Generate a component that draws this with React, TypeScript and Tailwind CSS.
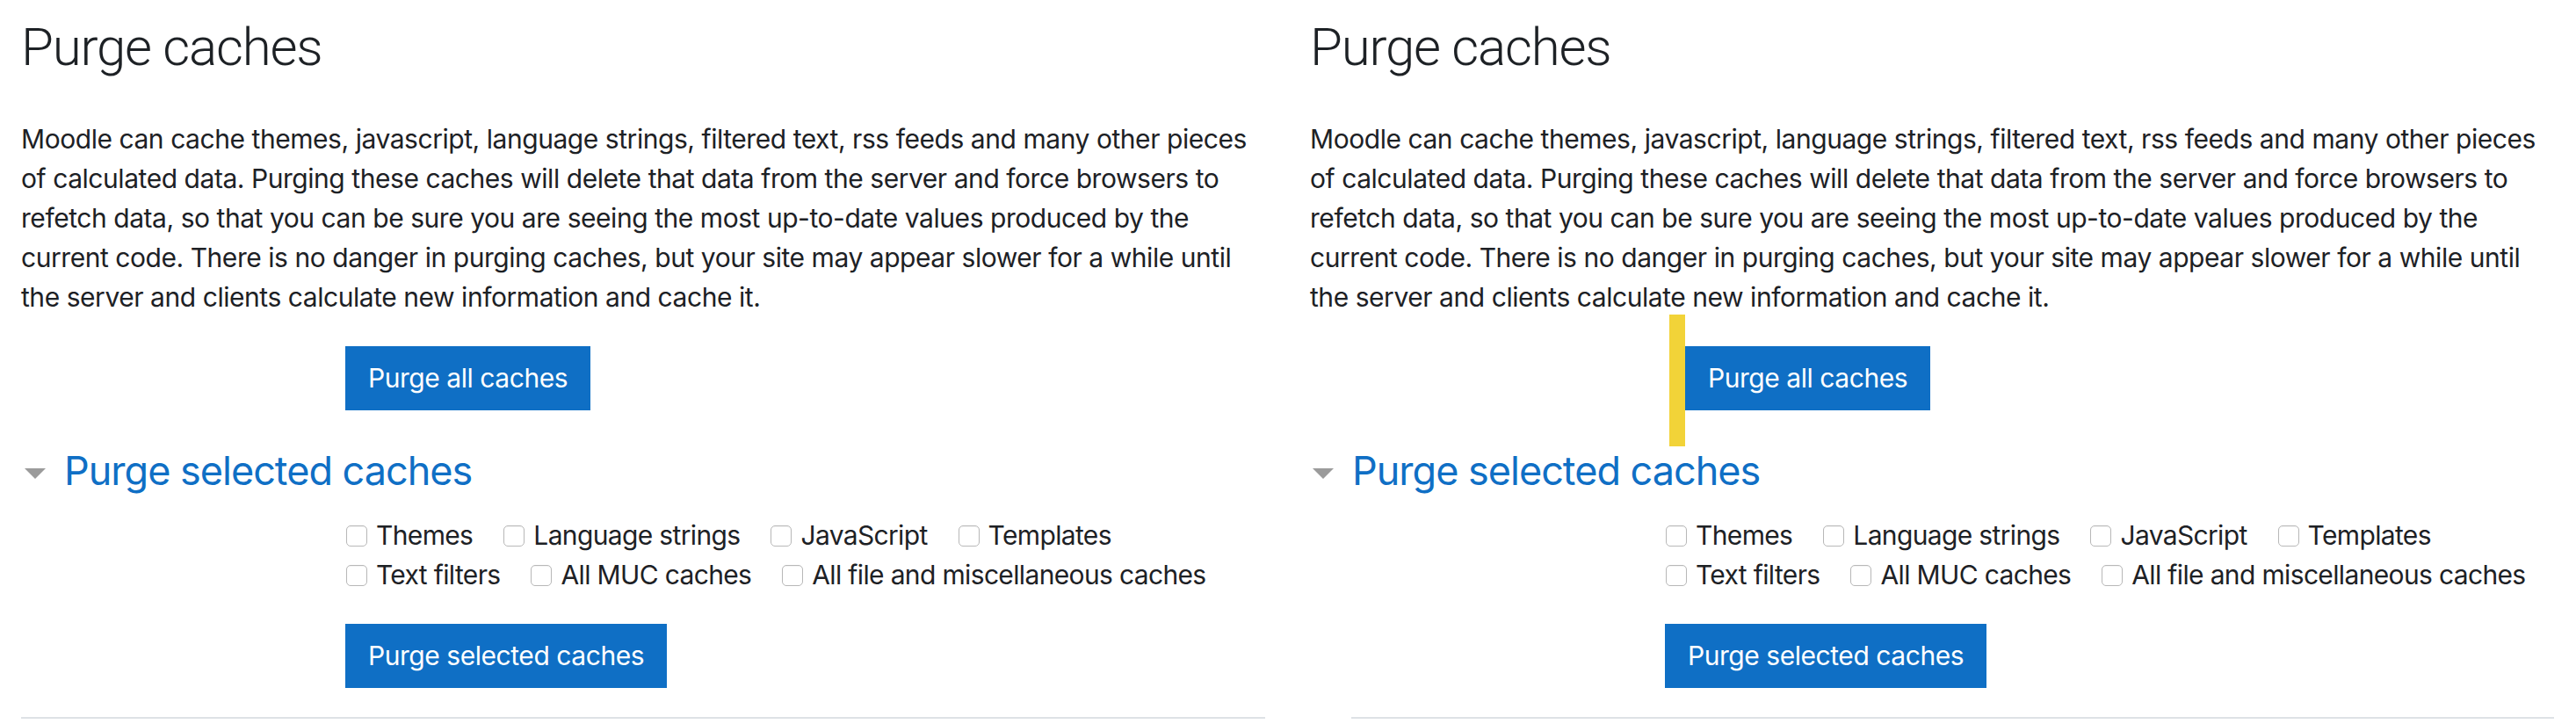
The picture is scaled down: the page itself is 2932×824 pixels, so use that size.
import type { ReactNode } from "react";

const cacheRows = [
  ["Themes", "Language strings", "JavaScript", "Templates"],
  ["Text filters", "All MUC caches", "All file and miscellaneous caches"],
];

function PurgeButton({ children }: { children: ReactNode }) {
  return (
    <button
      type="button"
      className="h-[73px] px-[26px] bg-[#0f6fc5] text-white text-[30px] leading-[45px] tracking-[-0.45px] whitespace-nowrap"
    >
      {children}
    </button>
  );
}

function CacheOption({ label }: { label: string }) {
  return (
    <label className="flex items-center gap-[10px] mr-[35px] whitespace-nowrap">
      <input
        type="checkbox"
        className="appearance-none w-6 h-6 rounded-[5px] border border-[#b8b8b8] bg-white shadow-[inset_0_1px_1px_rgba(0,0,0,0.05)]"
      />
      <span>{label}</span>
    </label>
  );
}

function Panel({ after = false }: { after?: boolean }) {
  return (
    <div className="w-[1467px] shrink-0 pl-[24px] pr-[27px] pt-[18px]">
      <h2 className="font-[Roboto,sans-serif] text-[60px] leading-[72px] font-light tracking-[-1.2px]">
        Purge caches
      </h2>
      <p className="mt-[46px] text-[30px] leading-[45px] tracking-[-0.45px] whitespace-nowrap">
        Moodle can cache themes, javascript, language strings, filtered text, rss feeds and many other pieces
        <br />
        of calculated data. Purging these caches will delete that data from the server and force browsers to
        <br />
        refetch data, so that you can be sure you are seeing the most up-to-date values produced by the
        <br />
        current code. There is no danger in purging caches, but your site may appear slower for a while until
        <br />
        the server and clients calculate new information and cache it.
      </p>

      {/* Purge all */}
      <div className={after ? "mt-[33px] pl-[427px]" : "mt-[33px] pl-[369px]"}>
        <div className="relative inline-block align-top">
          {after && (
            <span className="absolute -left-[18px] -top-[36px] w-[18px] h-[150px] bg-[#f2d338]" />
          )}
          <PurgeButton>Purge all caches</PurgeButton>
        </div>
      </div>

      {/* Purge selected section */}
      <div className="mt-[42px] flex items-center">
        <svg
          width="24"
          height="12"
          viewBox="0 0 24 12"
          className={after ? "ml-[3px] mt-[6px]" : "ml-[4px] mt-[6px]"}
        >
          <polygon points="0,0 24,0 12,12" fill="#9b9b9b" />
        </svg>
        <h3 className="ml-[21px] text-[45px] leading-[54px] tracking-[-1px] text-[#0f6fc5]">
          Purge selected caches
        </h3>
      </div>

      <div className={after ? "mt-[24px] pl-[405px]" : "mt-[24px] pl-[370px]"}>
        <div className="text-[30px] leading-[45px] tracking-[-0.65px]">
          {cacheRows.map((row, i) => (
            <div key={i} className="flex">
              {row.map((label) => (
                <CacheOption key={label} label={label} />
              ))}
            </div>
          ))}
        </div>
      </div>

      <div className={after ? "mt-[33px] pl-[404px]" : "mt-[33px] pl-[369px]"}>
        <PurgeButton>Purge selected caches</PurgeButton>
      </div>

      <div className={after ? "mt-[33px] ml-[47px] h-[2px] bg-[#dee2e6]" : "mt-[33px] h-[2px] bg-[#dee2e6]"} />
    </div>
  );
}

export default function App() {
  return (
    <div
      className="flex min-h-[824px] bg-white text-[#1d2125] overflow-hidden"
      style={{ fontFamily: "Inter, 'Noto Sans', 'Liberation Sans', sans-serif" }}
    >
      <Panel />
      <Panel after />
    </div>
  );
}
